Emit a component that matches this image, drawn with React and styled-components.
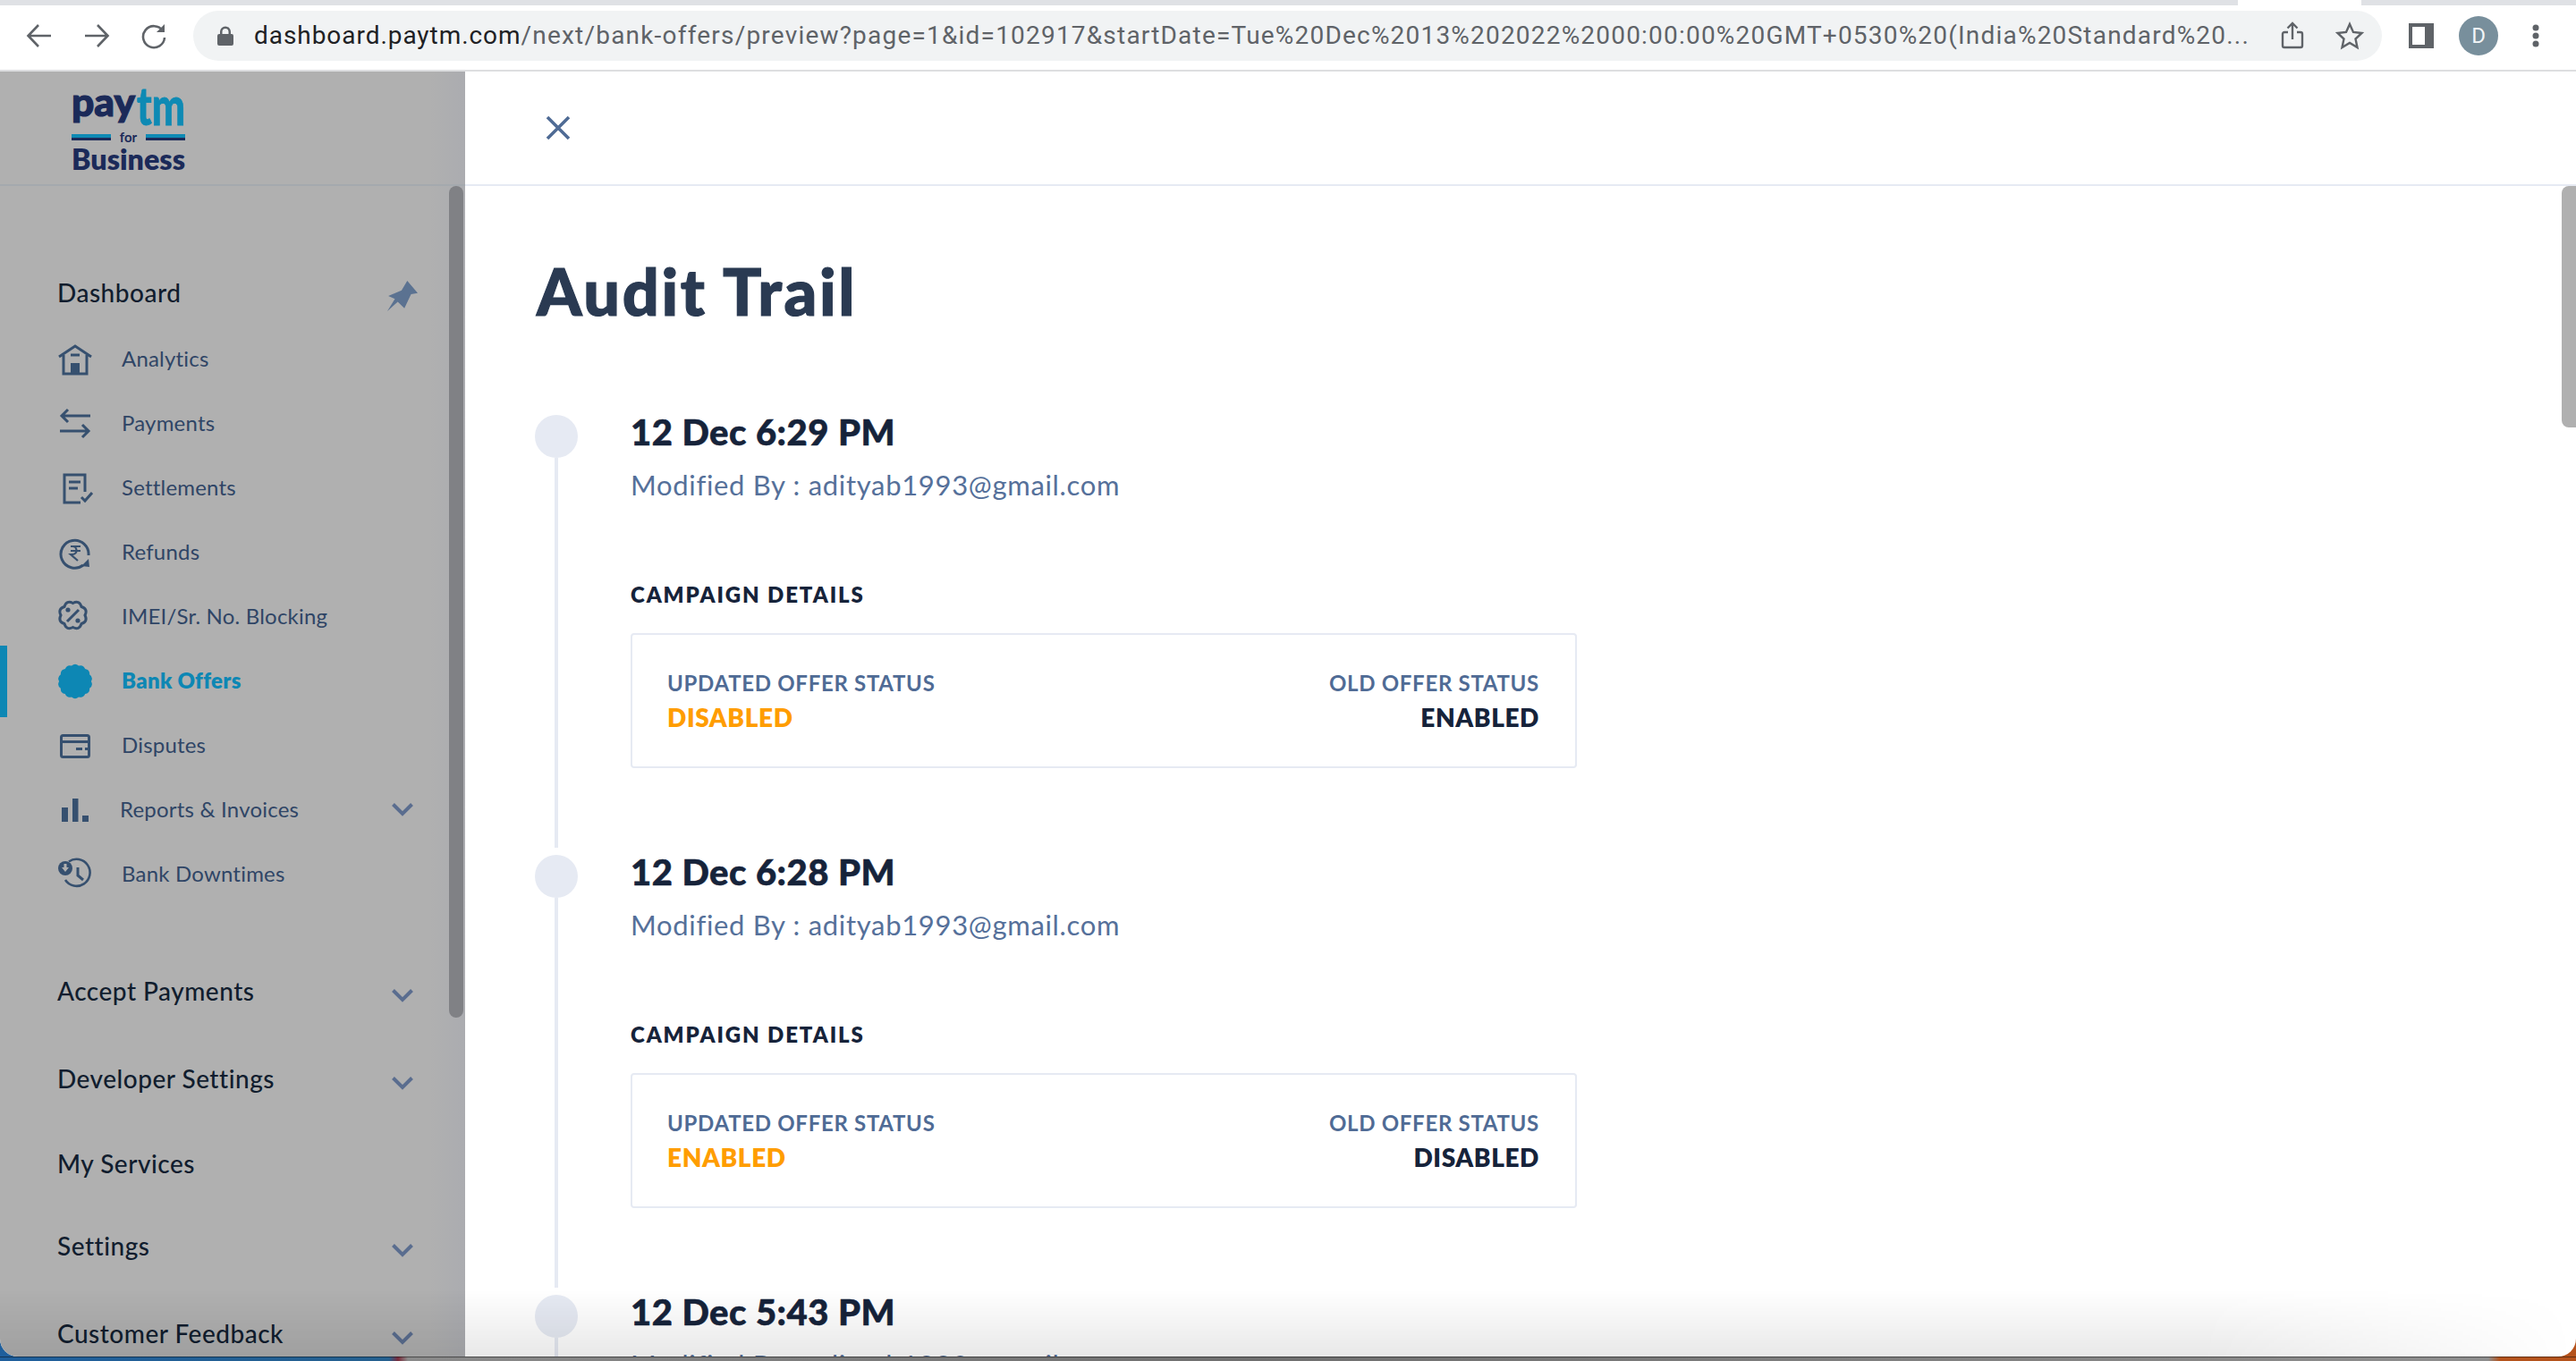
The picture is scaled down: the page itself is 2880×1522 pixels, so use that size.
import React from 'react';
import styled, { createGlobalStyle } from 'styled-components';

const GlobalStyle = createGlobalStyle`
    html, body {
        margin: 0;
        padding: 0;
        background: #245f96;
    }
    * {
        box-sizing: border-box;
    }
`;

const FONT = '"Lato", "Open Sans", sans-serif';

const Page = styled.div`
    width: 2880px;
    height: 1522px;
    overflow: hidden;
    display: flex;
    flex-direction: column;
    font-family: ${FONT};
    background:
        linear-gradient(to bottom, transparent 1517px, rgba(0, 0, 0, 0.45) 1517px, rgba(0, 0, 0, 0.45) 1518px, transparent 1518px),
        linear-gradient(to right, #1f5f9c 0, #24608f 435px, #7a2a3a 445px, #8a8a8a 456px, #6f6f6f 1400px, #8d8d8d 2700px, #8d8d8d 2782px, #b5531c 2795px);
`;

const Window = styled.div`
    position: relative;
    height: 1517px;
    flex: none;
    display: flex;
    flex-direction: column;
    overflow: hidden;
    background: #fff;
    border-radius: 0 0 20px 20px;
`;

const BottomShade = styled.div`
    position: absolute;
    left: 0;
    right: 0;
    bottom: 0;
    height: 75px;
    background: linear-gradient(to bottom, rgba(0, 0, 0, 0), rgba(0, 0, 0, 0.09));
    -webkit-mask-image: linear-gradient(to left, transparent 0, #000 420px);
    mask-image: linear-gradient(to left, transparent 0, #000 420px);
    pointer-events: none;
`;

/* browser bar */
const TabStrip = styled.div`
    height: 6px;
    flex: none;
    display: flex;
    background: #dfe1e5;
`;

const ActiveTab = styled.div`
    width: 138px;
    margin-left: 2502px;
    background: #fff;
`;

const Toolbar = styled.div`
    height: 74px;
    flex: none;
    display: flex;
    align-items: center;
    padding: 0 0 4px 28px;
    background: #fff;
    border-bottom: 2px solid #dddee0;
`;

const NavIcon = styled.svg`
    width: 32px;
    height: 32px;
    margin-right: ${props => props.$gap}px;
    flex: none;
    fill: none;
    stroke: #5f6368;
    stroke-width: 2.6;
`;

const Omnibox = styled.div`
    width: 2447px;
    height: 56px;
    margin-left: 28px;
    padding: 0 20px 0 27px;
    flex: none;
    display: flex;
    align-items: center;
    border-radius: 28px;
    background: #f1f3f4;
`;

const LockIcon = styled.svg`
    width: 18px;
    height: 22px;
    flex: none;
    fill: #5f6368;
`;

const UrlText = styled.div`
    width: 2266px;
    margin-left: 23px;
    flex: none;
    font-family: "Roboto", sans-serif;
    font-size: 28px;
    line-height: 34px;
    letter-spacing: 1.2px;
    white-space: nowrap;
    overflow: hidden;
    color: #5f6368;
`;

const UrlHost = styled.span`
    letter-spacing: 0.95px;
    color: #202124;
`;

const OmniIcon = styled.svg`
    width: 32px;
    height: 32px;
    margin-left: ${props => props.$left}px;
    flex: none;
    fill: none;
    stroke: #5f6368;
    stroke-width: 2.4;
`;

const PanelIcon = styled.div`
    width: 28px;
    height: 28px;
    margin-left: 30px;
    flex: none;
    border: 4px solid #5f6368;
    border-right-width: 10px;
    background: #fff;
`;

const Avatar = styled.div`
    width: 44px;
    height: 44px;
    margin-left: 28px;
    flex: none;
    display: flex;
    align-items: center;
    justify-content: center;
    border-radius: 50%;
    background: #788f9c;
    color: #f2f5f7;
    font-family: "Roboto", sans-serif;
    font-size: 24px;
`;

const Kebab = styled.svg`
    width: 8px;
    height: 26px;
    margin-left: 38px;
    flex: none;
    fill: #5f6368;
`;

/* page */
const Body = styled.div`
    flex: 1;
    min-height: 0;
    display: flex;
`;

const Sidebar = styled.aside`
    width: 520px;
    flex: none;
    display: flex;
    flex-direction: column;
    overflow: hidden;
    background: linear-gradient(to right, #b0b0b0 480px, #abacb0 520px);
`;

const LogoBar = styled.div`
    height: 128px;
    flex: none;
    padding-left: 80px;
    border-bottom: 2px solid #a4a9ae;
`;

const LogoSvg = styled.svg`
    display: block;
    width: 130px;
    height: 126px;
    overflow: visible;
`;

const SideBody = styled.div`
    flex: 1;
    min-height: 0;
    display: flex;
`;

const Nav = styled.nav`
    width: 502px;
    flex: none;
    padding-top: 81px;
`;

const SideThumb = styled.div`
    width: 16px;
    height: 930px;
    flex: none;
    border-radius: 8px;
    background: #808185;
`;

const SectionRow = styled.div`
    height: ${props => props.$height || 60}px;
    margin-top: ${props => props.$top || 0}px;
    padding: 0 40px 0 64px;
    display: flex;
    align-items: center;
    justify-content: space-between;
    font-size: 28px;
    font-weight: 500;
    letter-spacing: 0.5px;
    color: #111d2e;
`;

const NavRow = styled.div`
    position: relative;
    height: 72px;
    padding: 0 40px 0 64px;
    display: flex;
    align-items: center;
    font-size: 24px;
    font-weight: ${props => (props.$active ? 800 : 400)};
    letter-spacing: ${props => (props.$active ? 0.3 : 0.2)}px;
    color: ${props => (props.$active ? '#0d87b4' : '#2f4566')};
`;

const ActiveBar = styled.span`
    position: absolute;
    left: 0;
    top: -2px;
    width: 8px;
    height: 80px;
    background: #0d87b4;
`;

const NavGlyph = styled.svg`
    width: 40px;
    height: 40px;
    margin-top: 3px;
    flex: none;
    fill: none;
    stroke: ${props => props.$color || '#36506f'};
    stroke-width: 3;
`;

const NavLabel = styled.span`
    margin-left: ${props => props.$left || 32}px;
    flex: 1;
`;

const Chevron = styled.svg`
    width: 24px;
    height: 16px;
    margin-top: ${props => props.$drop || 0}px;
    flex: none;
    fill: none;
    stroke: #5a6d8f;
    stroke-width: 4;
`;

const Pin = styled.svg`
    width: 34px;
    height: 34px;
    margin: 8px -5px 0 0;
    flex: none;
    fill: #5b7291;
`;

const Main = styled.main`
    flex: 1;
    min-width: 0;
    display: flex;
    flex-direction: column;
`;

const MainHeader = styled.header`
    height: 128px;
    flex: none;
    padding: 49px 0 0 90px;
    border-bottom: 2px solid #e6eaf3;
`;

const CloseIcon = styled.svg`
    display: block;
    width: 28px;
    height: 28px;
    fill: none;
    stroke: #4f6b95;
    stroke-width: 3.6;
`;

const MainBody = styled.div`
    flex: 1;
    min-height: 0;
    display: flex;
    overflow: hidden;
`;

const Content = styled.div`
    width: 2344px;
    flex: none;
    padding: 77px 0 0 80px;
`;

const MainThumb = styled.div`
    width: 16px;
    height: 270px;
    flex: none;
    border-radius: 8px 0 0 8px;
    background: #b0b0b0;
`;

const Title = styled.h1`
    margin: 0 0 91px;
    font-size: 72px;
    line-height: 80px;
    font-weight: 900;
    letter-spacing: 2.6px;
    -webkit-text-stroke: 1.2px #2a3a52;
    color: #2a3a52;
`;

const Entry = styled.section`
    height: 492px;
    margin-left: -2px;
    display: flex;
`;

const Rail = styled.div`
    width: 48px;
    flex: none;
    padding-top: 8px;
    display: flex;
    flex-direction: column;
    align-items: center;
`;

const Dot = styled.div`
    width: 48px;
    height: 48px;
    flex: none;
    border-radius: 50%;
    background: #e6eaf3;
`;

const RailLine = styled.div`
    width: 4px;
    flex: 1;
    background: #e6eaf3;
`;

const EntryBody = styled.div`
    margin-left: 59px;
    width: 1058px;
`;

const DateText = styled.div`
    padding-top: 2px;
    font-size: 40px;
    line-height: 51px;
    font-weight: 900;
    letter-spacing: 0.5px;
    -webkit-text-stroke: 0.6px #16233a;
    color: #16233a;
`;

const ModifiedBy = styled.div`
    margin-top: 13px;
    font-size: 31px;
    line-height: 40px;
    font-weight: 400;
    letter-spacing: 0.68px;
    color: #55709a;
`;

const SectionTitle = styled.div`
    margin-top: 88px;
    font-size: 24px;
    line-height: 30px;
    font-weight: 800;
    letter-spacing: 1.9px;
    color: #16233a;
`;

const Card = styled.div`
    height: 151px;
    margin-top: 28px;
    padding: 39px 40px 0 39px;
    display: flex;
    justify-content: space-between;
    border: 2px solid #e6eaf3;
    border-radius: 4px;
`;

const Status = styled.div`
    text-align: ${props => (props.$right ? 'right' : 'left')};
`;

const StatusLabel = styled.div`
    font-size: 24px;
    line-height: 30px;
    font-weight: 700;
    letter-spacing: 0.7px;
    color: #4f6b95;
`;

const StatusValue = styled.div`
    margin-top: 6px;
    font-size: 28px;
    line-height: 34px;
    font-weight: 800;
    letter-spacing: 0.6px;
    color: ${props => (props.$highlight ? '#ff9d00' : '#16233a')};
`;

const scallop = (cx, cy, r, n, bump) => {
    let d = '';
    for (let i = 0; i < n; i++) {
        const a = (i / n) * Math.PI * 2;
        const b = ((i + 0.5) / n) * Math.PI * 2;
        const c = ((i + 1) / n) * Math.PI * 2;
        const inner = r - bump;
        if (i === 0) {
            d += `M${cx + inner * Math.cos(a)} ${cy + inner * Math.sin(a)}`;
        }
        d += `Q${cx + (r + bump) * Math.cos(b)} ${cy + (r + bump) * Math.sin(b)} ${cx + inner * Math.cos(c)} ${cy + inner * Math.sin(c)}`;
    }
    return d + 'Z';
};

const icons = {
    house: (
        <NavGlyph viewBox="0 0 40 40">
            <path d="M2 17L20 5l18 12M7 15v21h26V15M15 15h10" />
            <rect x="15" y="24" width="10" height="12" fill="#36506f" stroke="none" />
        </NavGlyph>
    ),
    arrows: (
        <NavGlyph viewBox="0 0 40 40">
            <path d="M37 11H5M12 4l-7 7 7 7M3 28h32M28 21l7 7-7 7" />
        </NavGlyph>
    ),
    settle: (
        <NavGlyph viewBox="0 0 40 40">
            <path d="M31 24V5H8v31h18M13 13h13M13 20h10M27 30l4 4 8-9" />
        </NavGlyph>
    ),
    refund: (
        <NavGlyph viewBox="0 0 40 40">
            <path d="M29 34A15.5 15.5 0 1 1 35 23" />
            <path d="M15 13h11M15 18h11M17 13c6 0 6 9 0 9h-2l8 7" strokeWidth="2.2" />
            <path d="M36 36l-9-1 8-8z" fill="#36506f" stroke="none" />
        </NavGlyph>
    ),
    percent: (
        <NavGlyph viewBox="0 0 40 40">
            <path d={scallop(17.5, 18, 16, 8, 2.5)} />
            <path d="M24 12L11 25" />
            <circle cx="12" cy="12" r="2.6" fill="#36506f" stroke="none" />
            <circle cx="23" cy="24" r="2.6" fill="#36506f" stroke="none" />
        </NavGlyph>
    ),
    offer: (
        <NavGlyph viewBox="0 0 40 40">
            <path d={scallop(20, 20, 19.5, 14, 1.6)} fill="#0d87b4" stroke="none" />
        </NavGlyph>
    ),
    card: (
        <NavGlyph viewBox="0 0 40 40">
            <rect x="4.5" y="8.5" width="31" height="24" rx="2" />
            <path d="M4 15.5h32M21 23.5h7M31 23.5h3" />
        </NavGlyph>
    ),
    bars: (
        <NavGlyph viewBox="0 0 40 40">
            <path d="M5 17h7v16H5zM17 7h6.500v26H17zM28 26h7v7h-7z" fill="#36506f" stroke="none" />
        </NavGlyph>
    ),
    clock: (
        <NavGlyph viewBox="0 0 40 40">
            <path d="M13 5.500A15 15 0 1 1 9 26" strokeWidth="2.600" />
            <path d="M23 12v9l6 5" />
            <circle cx="9" cy="13" r="8" fill="#36506f" stroke="none" />
            <path d="M5 12h8l-4 5zM7.500 8h3v5h-3z" fill="#b0b0b0" stroke="none" />
        </NavGlyph>
    ),
};

const Down = ({ drop }) => (
    <Chevron viewBox="0 0 24 16" $drop={drop}>
        <path d="M1.500 2.500L12 13 22.500 2.500" />
    </Chevron>
);

const navItems = [
    { label: 'Analytics', icon: 'house' },
    { label: 'Payments', icon: 'arrows' },
    { label: 'Settlements', icon: 'settle' },
    { label: 'Refunds', icon: 'refund' },
    { label: 'IMEI/Sr. No. Blocking', icon: 'percent' },
    { label: 'Bank Offers', icon: 'offer', active: true },
    { label: 'Disputes', icon: 'card' },
    { label: 'Reports & Invoices', icon: 'bars', left: 30, more: true },
    { label: 'Bank Downtimes', icon: 'clock' },
];

const sections = [
    { label: 'Accept Payments', top: 66, more: true },
    { label: 'Developer Settings', top: 38, more: true },
    { label: 'My Services', top: 35 },
    { label: 'Settings', top: 32, more: true },
    { label: 'Customer Feedback', top: 38, more: true },
];

const entries = [
    { date: '12 Dec 6:29 PM', updated: 'DISABLED', old: 'ENABLED' },
    { date: '12 Dec 6:28 PM', updated: 'ENABLED', old: 'DISABLED' },
    { date: '12 Dec 5:43 PM' },
];

const URL_TAIL = '/next/bank-offers/preview?page=1&id=102917&startDate=Tue%20Dec%2013%202022%2000:00:00%20GMT+0530%20(India%20Standard%20...';

const Logo = () => (
    <LogoSvg viewBox="0 0 130 126">
        <text x="0" y="50" fontFamily="Lato" fontWeight="900" fontSize="44" fill="#1b2a59" stroke="#1b2a59" strokeWidth="1.2" textLength="71" lengthAdjust="spacingAndGlyphs">pay</text>
        <text x="73" y="60" fontFamily="Lato" fontWeight="900" fontSize="59" fill="#0e8ab4" stroke="#0e8ab4" strokeWidth="0.8" textLength="54" lengthAdjust="spacingAndGlyphs">tm</text>
        <rect x="0" y="70" width="44" height="4" fill="#0e8ab4" />
        <rect x="0" y="74" width="44" height="3" fill="#1b2a59" />
        <rect x="83" y="70" width="44" height="4" fill="#0e8ab4" />
        <rect x="83" y="74" width="44" height="3" fill="#1b2a59" />
        <text x="63.500" y="79" textAnchor="middle" fontFamily="Lato" fontWeight="700" fontSize="15" fill="#1b2a59">for</text>
        <text x="0" y="110" fontFamily="Lato" fontWeight="800" fontSize="32" fill="#1b2a59" textLength="127" lengthAdjust="spacingAndGlyphs">Business</text>
    </LogoSvg>
);

const App = () => (
    <Page>
        <GlobalStyle />
        <Window>
            <TabStrip>
                <ActiveTab />
            </TabStrip>
            <Toolbar>
                <NavIcon viewBox="0 0 32 32" $gap={32}>
                    <path d="M29 16H4M15 4L3.500 16 15 28" />
                </NavIcon>
                <NavIcon viewBox="0 0 32 32" $gap={32}>
                    <path d="M3 16h25M17 4l11.500 12L17 28" />
                </NavIcon>
                <NavIcon viewBox="0 0 32 32" $gap={0}>
                    <path d="M26 10.500A12 12 0 1 0 28 18" />
                    <path d="M28 3v9h-9z" fill="#5f6368" stroke="none" />
                </NavIcon>
                <Omnibox>
                    <LockIcon viewBox="0 0 18 22">
                        <path d="M3 9V6.500a6 6 0 0 1 12 0V9h1a2 2 0 0 1 2 2v9a2 2 0 0 1-2 2H2a2 2 0 0 1-2-2v-9a2 2 0 0 1 2-2zm2.500 0h7V6.500a3.500 3.500 0 0 0-7 0z" />
                    </LockIcon>
                    <UrlText>
                        <UrlHost>dashboard.paytm.com</UrlHost>{URL_TAIL}
                    </UrlText>
                    <OmniIcon viewBox="0 0 32 32" $left={-3}>
                        <path d="M11 12H7a2 2 0 0 0-2 2v13a2 2 0 0 0 2 2h18a2 2 0 0 0 2-2V14a2 2 0 0 0-2-2h-4M16 20V2M10.500 7.500L16 2l5.500 5.500" />
                    </OmniIcon>
                    <OmniIcon viewBox="0 0 32 32" $left={32}>
                        <path d="M16 3l4 9 9.500 1-7 6.500 2 9.500-8.500-5-8.500 5 2-9.500-7-6.500L12 12z" strokeLinejoin="miter" />
                    </OmniIcon>
                </Omnibox>
                <PanelIcon />
                <Avatar>D</Avatar>
                <Kebab viewBox="0 0 8 26">
                    <circle cx="4" cy="4" r="3.500" />
                    <circle cx="4" cy="13" r="3.500" />
                    <circle cx="4" cy="22" r="3.500" />
                </Kebab>
            </Toolbar>
            <Body>
                <Sidebar>
                    <LogoBar>
                        <Logo />
                    </LogoBar>
                    <SideBody>
                        <Nav>
                            <SectionRow $height={75}>
                                Dashboard
                                <Pin viewBox="0 0 32 32">
                                    <path d="M21 0l11 13-7 1-7 15-7-7-11 10 8-13-7-3 14-6z" />
                                </Pin>
                            </SectionRow>
                            {navItems.map(item => (
                                <NavRow key={item.label} $active={item.active}>
                                    {item.active && <ActiveBar />}
                                    {icons[item.icon]}
                                    <NavLabel $left={item.left}>{item.label}</NavLabel>
                                    {item.more && <Down drop={2} />}
                                </NavRow>
                            ))}
                            {sections.map(section => (
                                <SectionRow key={section.label} $top={section.top}>
                                    {section.label}
                                    {section.more && <Down drop={9} />}
                                </SectionRow>
                            ))}
                        </Nav>
                        <SideThumb />
                    </SideBody>
                </Sidebar>
                <Main>
                    <MainHeader>
                        <CloseIcon viewBox="0 0 28 28">
                            <path d="M2 2l24 24M26 2L2 26" />
                        </CloseIcon>
                    </MainHeader>
                    <MainBody>
                        <Content>
                            <Title>Audit Trail</Title>
                            {entries.map(entry => (
                                <Entry key={entry.date}>
                                    <Rail>
                                        <Dot />
                                        <RailLine />
                                    </Rail>
                                    <EntryBody>
                                        <DateText>{entry.date}</DateText>
                                        <ModifiedBy>Modified By : adityab1993@gmail.com</ModifiedBy>
                                        {entry.updated && (
                                            <>
                                                <SectionTitle>CAMPAIGN DETAILS</SectionTitle>
                                                <Card>
                                                    <Status>
                                                        <StatusLabel>UPDATED OFFER STATUS</StatusLabel>
                                                        <StatusValue $highlight>{entry.updated}</StatusValue>
                                                    </Status>
                                                    <Status $right>
                                                        <StatusLabel>OLD OFFER STATUS</StatusLabel>
                                                        <StatusValue>{entry.old}</StatusValue>
                                                    </Status>
                                                </Card>
                                            </>
                                        )}
                                    </EntryBody>
                                </Entry>
                            ))}
                        </Content>
                        <MainThumb />
                    </MainBody>
                </Main>
            </Body>
            <BottomShade />
        </Window>
    </Page>
);

export default App;
